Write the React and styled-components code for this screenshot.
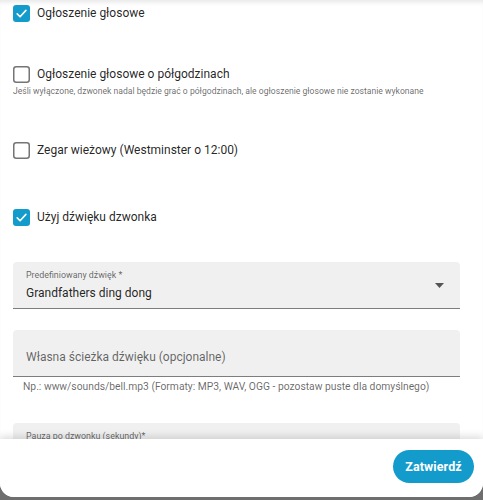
import React from "react";
import styled, { createGlobalStyle } from "styled-components";

const Global = createGlobalStyle`
  html, body {
    margin: 0;
    padding: 0;
    background: #6e6e6e;
  }
  body {
    font-family: Roboto, "Noto Sans", "Liberation Sans", sans-serif;
    color: rgba(0, 0, 0, 0.87);
  }
`;

const ACCENT = "#129bcb";

const Dialog = styled.div`
  width: 483px;
  height: 497px;
  background: #fff;
  border-radius: 0 0 14px 14px;
  display: flex;
  flex-direction: column;
  overflow: hidden;
`;

const Content = styled.div`
  flex: 1;
  overflow: hidden;
  padding: 2px 23px 0 13px;
  box-shadow: inset 0 5px 5px -3px rgba(0, 0, 0, 0.1);
`;

const Footer = styled.div`
  flex-shrink: 0;
  height: 58px;
  position: relative;
  z-index: 1;
  background: #fff;
  box-shadow: 0 -3px 7px rgba(0, 0, 0, 0.13);
  display: flex;
  justify-content: flex-end;
  align-items: flex-start;
  padding: 11px 9px 0 0;
  box-sizing: border-box;
`;

const SubmitButton = styled.button`
  height: 33px;
  width: 81px;
  border: none;
  border-radius: 17px;
  background: ${ACCENT};
  color: #fff;
  font-family: Roboto, sans-serif;
  font-weight: 700;
  font-size: 12.5px;
  letter-spacing: 0.1px;
  cursor: pointer;
`;

const OptionRow = styled.label`
  display: flex;
  align-items: center;
  gap: 7px;
  height: 22px;
  margin-top: ${(p) => p.$gap || 0}px;
  font-size: 12px;
  cursor: pointer;
`;

const OptionHint = styled.div`
  font-size: 8.6px;
  line-height: 12px;
  color: rgba(0, 0, 0, 0.6);
`;

const Box = styled.svg`
  flex-shrink: 0;
  display: block;
`;

function CheckBox({ checked }) {
  return (
    <Box width="17" height="17" viewBox="0 0 17 17">
      {checked ? (
        <>
          <rect x="0" y="0" width="17" height="17" rx="3" fill={ACCENT} />
          <path
            d="M4.2 8.9 L7.1 11.8 L12.9 5.4"
            fill="none"
            stroke="#fff"
            strokeWidth="1.6"
            strokeLinecap="round"
            strokeLinejoin="round"
          />
        </>
      ) : (
        <rect
          x="0.75"
          y="0.75"
          width="15.5"
          height="15.5"
          rx="2.5"
          fill="#fff"
          stroke="#757575"
          strokeWidth="1.5"
        />
      )}
    </Box>
  );
}

const Field = styled.div`
  position: relative;
  height: 46px;
  margin-top: ${(p) => p.$gap || 0}px;
  background: #f0f0f0;
  border-radius: 4px 4px 0 0;
  border-bottom: 1px solid #7d7d7d;
  padding: 0 13px;
  display: flex;
  flex-direction: column;
  justify-content: ${(p) => (p.$empty ? "center" : "flex-start")};
`;

const FieldLabel = styled.div`
  font-size: 8.9px;
  line-height: 12px;
  margin-top: 7px;
  color: rgba(0, 0, 0, 0.6);
`;

const FieldValue = styled.div`
  font-size: 12px;
  line-height: 18px;
  margin-top: 3px;
  color: rgba(0, 0, 0, 0.87);
`;

const Placeholder = styled.div`
  font-size: 12px;
  line-height: 18px;
  margin-top: 7px;
  color: rgba(0, 0, 0, 0.6);
`;

const Arrow = styled.svg`
  position: absolute;
  right: 16px;
  top: 21px;
`;

const FieldHelper = styled.div`
  font-size: 10.3px;
  line-height: 14px;
  margin: 3px 0 0 10px;
  color: rgba(0, 0, 0, 0.6);
`;

export default function App() {
  return (
    <>
      <Global />
      <Dialog>
        <Content>
          <OptionRow>
            <CheckBox checked />
            Ogłoszenie głosowe
          </OptionRow>
          <OptionRow $gap={39}>
            <CheckBox />
            Ogłoszenie głosowe o półgodzinach
          </OptionRow>
          <OptionHint>
            Jeśli wyłączone, dzwonek nadal będzie grać o półgodzinach, ale ogłoszenie głosowe nie zostanie wykonane
          </OptionHint>
          <OptionRow $gap={42}>
            <CheckBox />
            Zegar wieżowy (Westminster o 12:00)
          </OptionRow>
          <OptionRow $gap={45}>
            <CheckBox checked />
            Użyj dźwięku dzwonka
          </OptionRow>

          <Field $gap={34}>
            <FieldLabel>Predefiniowany dźwięk *</FieldLabel>
            <FieldValue>Grandfathers ding dong</FieldValue>
            <Arrow width="9" height="5" viewBox="0 0 9 5">
              <path d="M0 0 L9 0 L4.5 5 Z" fill="#555" />
            </Arrow>
          </Field>

          <Field $gap={21} $empty>
            <Placeholder>Własna ścieżka dźwięku (opcjonalne)</Placeholder>
          </Field>
          <FieldHelper>
            Np.: www/sounds/bell.mp3 (Formaty: MP3, WAV, OGG - pozostaw puste dla domyślnego)
          </FieldHelper>

          <Field $gap={29}>
            <FieldLabel>Pauza po dzwonku (sekundy)*</FieldLabel>
          </Field>
        </Content>
        <Footer>
          <SubmitButton>Zatwierdź</SubmitButton>
        </Footer>
      </Dialog>
    </>
  );
}
